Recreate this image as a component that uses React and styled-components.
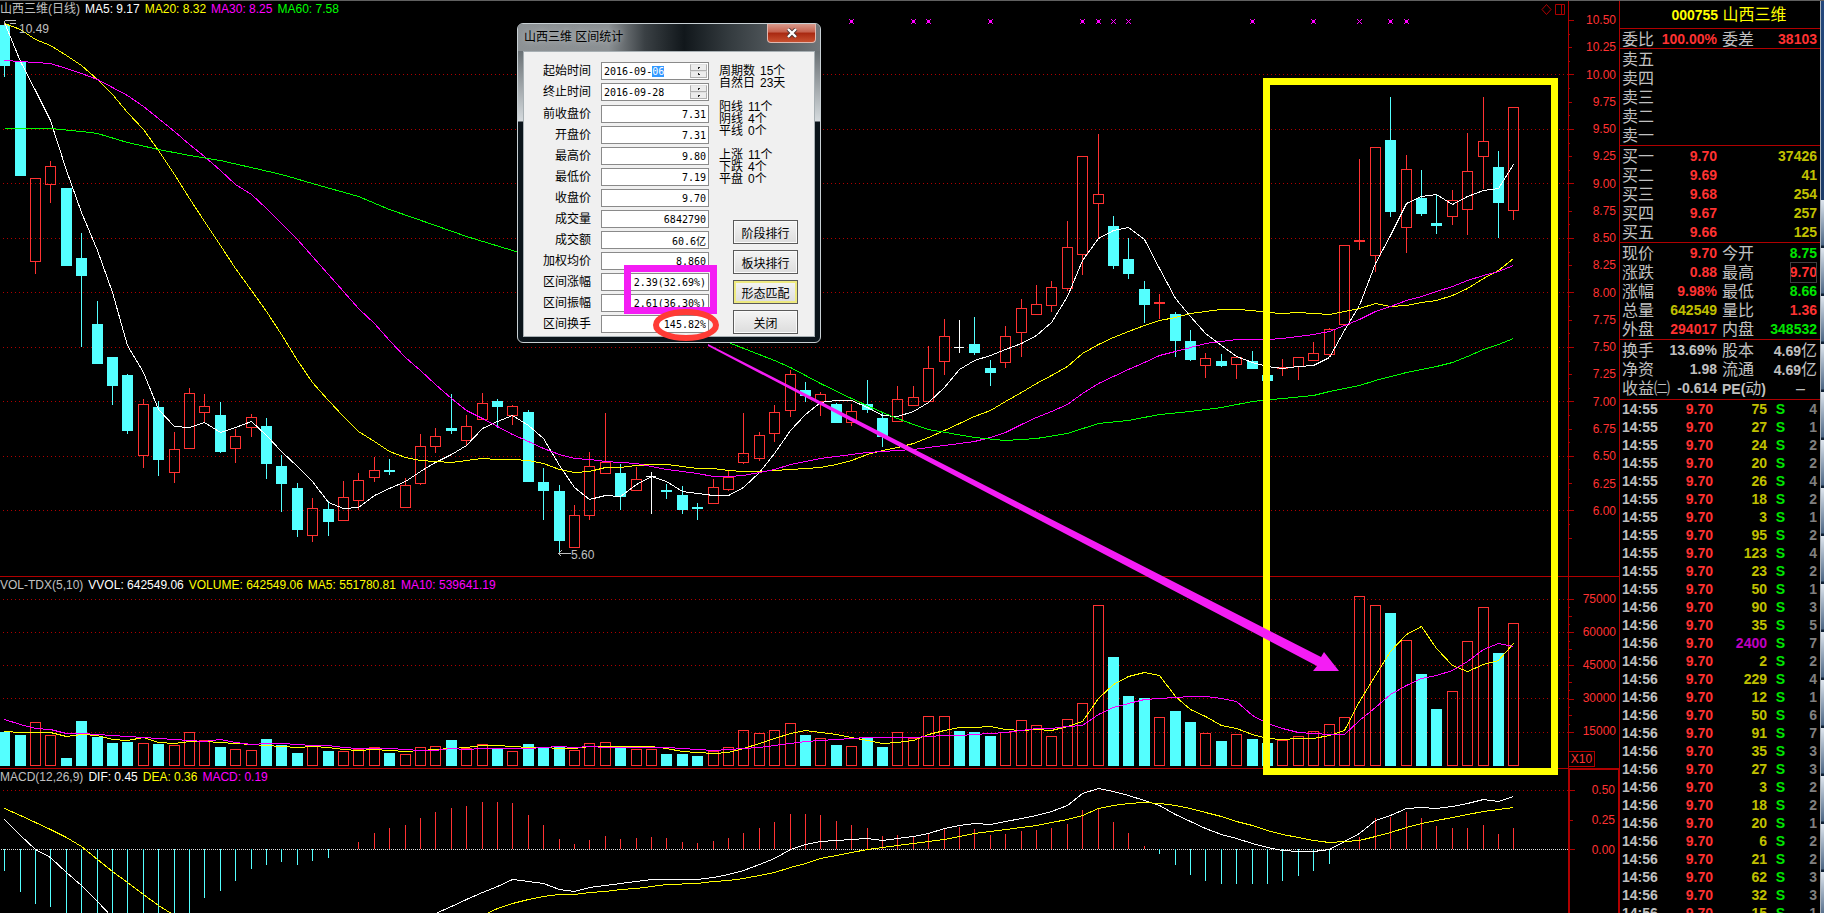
import React, { useEffect, useRef } from 'react';
import styled, { createGlobalStyle } from 'styled-components';

const UP = '#ff3232';
const DOWN = '#54ffff';
const LINE = '#b00000';

// [direction, high, body top, body bottom, low] on the plot scale
const candles = [
    ['d', 21, 25, 66, 77], ['d', 60, 62, 176, 176], ['u', 178, 178, 262, 274], ['u', 161, 166, 185, 203],
    ['d', 188, 188, 266, 266], ['d', 233, 258, 276, 347], ['d', 301, 324, 364, 364], ['d', 357, 357, 386, 405],
    ['d', 374, 375, 431, 434], ['u', 399, 404, 456, 468], ['d', 401, 407, 460, 476], ['u', 432, 449, 473, 483],
    ['u', 388, 393, 449, 449], ['u', 394, 406, 413, 422], ['d', 402, 415, 452, 453], ['u', 429, 436, 449, 463],
    ['u', 414, 417, 428, 437], ['d', 418, 426, 464, 479], ['d', 455, 466, 484, 512], ['d', 483, 488, 530, 537],
    ['u', 498, 508, 536, 542], ['d', 501, 509, 522, 536], ['u', 481, 497, 521, 521], ['u', 473, 480, 501, 510],
    ['u', 457, 470, 478, 482], ['d', 459, 470, 472, 475], ['u', 478, 485, 508, 508], ['u', 434, 446, 484, 485],
    ['u', 428, 436, 447, 453], ['d', 394, 428, 431, 434], ['u', 415, 426, 441, 445], ['u', 393, 403, 420, 420],
    ['d', 399, 401, 407, 428], ['u', 405, 406, 416, 425], ['d', 410, 412, 482, 482], ['d', 468, 482, 491, 520],
    ['d', 485, 491, 541, 554], ['u', 505, 515, 548, 548], ['u', 452, 466, 516, 520], ['u', 413, 462, 474, 474],
    ['d', 464, 473, 497, 510], ['u', 467, 479, 491, 491], ['n', 472, 476, 477, 514], ['d', 484, 490, 492, 499],
    ['d', 486, 495, 510, 514], ['d', 503, 507, 509, 520], ['u', 479, 487, 504, 504], ['u', 471, 477, 490, 491],
    ['u', 413, 453, 463, 464], ['u', 432, 435, 459, 461], ['u', 405, 412, 434, 442], ['u', 370, 374, 411, 417],
    ['d', 382, 390, 396, 402], ['u', 392, 394, 402, 416], ['d', 403, 404, 423, 423], ['u', 404, 411, 423, 426],
    ['d', 380, 404, 410, 413], ['d', 412, 418, 437, 447], ['u', 386, 399, 422, 422], ['u', 386, 397, 406, 406],
    ['u', 346, 368, 402, 402], ['u', 319, 336, 362, 375], ['n', 320, 347, 348, 353], ['d', 317, 344, 353, 355],
    ['d', 360, 368, 373, 386], ['u', 326, 336, 363, 368], ['u', 299, 308, 333, 357], ['u', 285, 304, 315, 315],
    ['u', 281, 287, 306, 312], ['u', 221, 247, 289, 291], ['u', 156, 156, 255, 275], ['u', 134, 194, 204, 238],
    ['d', 216, 226, 266, 269], ['d', 238, 259, 274, 279], ['d', 281, 289, 305, 323], ['u', 294, 302, 304, 319],
    ['d', 312, 314, 341, 357], ['d', 330, 341, 360, 361], ['u', 353, 358, 366, 378], ['d', 354, 361, 366, 367],
    ['u', 357, 357, 365, 379], ['d', 351, 361, 369, 369], ['d', 375, 375, 381, 381], ['u', 359, 367, 368, 376],
    ['u', 357, 357, 367, 380], ['u', 342, 353, 361, 361], ['u', 328, 329, 355, 356], ['u', 245, 245, 325, 325],
    ['u', 159, 240, 242, 250], ['u', 147, 147, 256, 272], ['d', 97, 140, 212, 217], ['u', 155, 169, 228, 253],
    ['d', 170, 198, 214, 216], ['d', 195, 223, 226, 234], ['u', 190, 200, 217, 225], ['u', 133, 171, 210, 235],
    ['u', 97, 141, 157, 189], ['d', 151, 167, 203, 238], ['u', 107, 107, 211, 220],
];

const volumeTops = [
    732, 735, 722, 735, 758, 721, 737, 743, 742, 743, 744, 745, 732, 740, 747, 749, 750, 739, 745, 753,
    745, 751, 751, 749, 747, 753, 754, 747, 746, 740, 748, 744, 749, 751, 744, 748, 747, 750, 743, 742,
    747, 749, 749, 754, 754, 756, 751, 747, 730, 733, 730, 723, 735, 738, 745, 746, 738, 747, 732, 738,
    716, 716, 731, 732, 736, 732, 720, 725, 736, 719, 703, 605, 657, 696, 698, 717, 711, 722, 733, 741,
    734, 739, 743, 740, 736, 731, 724, 717, 596, 605, 613, 640, 674, 709, 691, 641, 607, 653, 623,
];

const macdEnds = [
    871, 892, 904, 907, 914, 920, 925, 930, 930, 930, 925, 920, 914, 898, 891, 881, 869, 865, 862, 865,
    861, 858, 849, 842, 833, 828, 825, 818, 812, 808, 806, 802, 802, 803, 815, 825, 839, 844, 840, 836,
    839, 838, 837, 838, 842, 843, 841, 838, 833, 828, 822, 814, 814, 815, 821, 825, 828, 836, 835, 836,
    833, 828, 827, 829, 835, 834, 831, 830, 828, 824, 810, 809, 822, 833, 846, 854, 865, 875, 881, 884,
    884, 884, 884, 881, 876, 871, 864, 848, 837, 818, 817, 812, 818, 826, 828, 828, 825, 834, 828,
];

const dif = [
    [0, 819], [1, 835], [2, 849], [3, 857], [4, 872], [5, 885], [6, 901], [7, 917], [12, 960], [22, 960],
    [28, 913], [29, 906], [30, 899], [31, 892], [32, 886], [33, 879], [34, 881], [35, 883], [36, 889], [37, 891],
    [38, 887], [39, 885], [40, 883], [41, 881], [42, 879], [45, 879], [46, 877], [47, 874], [48, 870], [49, 864],
    [50, 858], [51, 849], [52, 844], [53, 841], [54, 840], [55, 839], [56, 838], [57, 840], [58, 838], [59, 836],
    [60, 833], [61, 828], [62, 825], [63, 823], [64, 824], [65, 821], [66, 818], [67, 815], [68, 811], [69, 805],
    [70, 793], [71, 788], [72, 791], [73, 795], [74, 800], [75, 805], [76, 814], [77, 821], [78, 828], [79, 834],
    [80, 838], [81, 843], [82, 847], [83, 850], [84, 851], [85, 851], [86, 849], [87, 841], [88, 833], [89, 820],
    [90, 815], [91, 808], [92, 807], [93, 808], [94, 806], [95, 803], [96, 799], [97, 801], [98, 796],
];

const dea = [
    [0, 808], [1, 815], [2, 822], [3, 829], [4, 837], [5, 846], [6, 859], [7, 871], [8, 882], [9, 894],
    [10, 905], [11, 915], [16, 960], [26, 950], [31, 915], [32, 908], [33, 903], [34, 899], [35, 896], [36, 894],
    [37, 894], [38, 892], [39, 891], [40, 889], [41, 888], [42, 886], [43, 884], [45, 883], [46, 881], [47, 880],
    [48, 878], [49, 875], [50, 872], [51, 867], [52, 863], [53, 858], [54, 855], [55, 852], [56, 849], [57, 847],
    [58, 845], [60, 841], [61, 839], [62, 836], [63, 833], [64, 831], [67, 825], [68, 822], [69, 819], [70, 815],
    [71, 808], [72, 805], [73, 803], [74, 802], [75, 803], [76, 805], [77, 808], [78, 812], [79, 816], [80, 821],
    [81, 825], [82, 830], [83, 834], [84, 837], [85, 840], [86, 842], [87, 841], [88, 840], [89, 836], [90, 832],
    [91, 827], [92, 823], [93, 820], [94, 817], [95, 814], [96, 811], [97, 809], [98, 807],
];

const ma60 = [
    [0, 128], [3, 128], [5, 131], [6, 133], [8, 142], [10, 149], [12, 155], [14, 160], [18, 174], [20, 183],
    [23, 196], [25, 209], [28, 225], [30, 236], [33, 250], [39, 283], [47, 342], [50, 360], [51, 367], [53, 383],
    [55, 398], [57, 412], [58, 418], [59, 424], [60, 429], [63, 437], [65, 440], [67, 438], [69, 433], [71, 423],
    [73, 420], [75, 414], [77, 411], [79, 407], [81, 401], [83, 398], [85, 395], [86, 391], [88, 385], [89, 380],
    [91, 372], [93, 366], [94, 362], [95, 356], [96, 349], [97, 344], [98, 338],
];

// values before the first full averaging window
const ma5Head = [22, 61, 90, 120];
const ma20Head = [23, 29, 39, 45, 55, 65, 79, 94, 112, 129, 150, 174, 198, 221, 245, 268, 290, 311, 334];
const ma30Head = [
    60, 61, 62, 63, 68, 73, 79, 87, 95, 106, 118, 131, 144, 156, 170,
    184, 194, 208, 223, 239, 256, 274, 291, 308, 323, 340, 357, 370, 384,
];
const vol5Head = [731, 732, 732, 732];
const vol10Head = [719, 724, 728, 729, 733, 733, 734, 735, 736];

const closes = candles.map(c => (c[0] === 'd' ? c[3] : c[2]));
const slotX = i => Math.floor(4.6 + 15.4 * i);

const average = (values, span, head) =>
    values.map((v, i) => {
        if (i < head.length) return [i, head[i]];
        const part = values.slice(i - span + 1, i + 1);
        return [i, part.reduce((a, b) => a + b, 0) / span];
    });

const toPoints = list => list.map(([i, y]) => `${slotX(i) + 0.5},${Math.round(y) + 0.5}`).join(' ');

const markers = [
    [55, 1], [59, 1], [60, 1], [64, 1], [70, 1], [71, 1], [72, 0], [73, 0],
    [81, 1], [85, 1], [88, 0], [90, 1], [91, 1],
];

const priceGrid = [10, 9.5, 9, 8.5, 8, 7.5, 7, 6.5, 6];
const priceY = p => Math.round(74 + (10 - p) * 109);
const priceLabels = Array.from({ length: 19 }, (_, i) => (10.5 - i * 0.25).toFixed(2));
const volumeGrid = [599, 632, 665, 698, 732];

const sells = ['卖五', '卖四', '卖三', '卖二', '卖一'];
const buys = [
    ['买一', '9.70', '37426'],
    ['买二', '9.69', '41'],
    ['买三', '9.68', '254'],
    ['买四', '9.67', '257'],
    ['买五', '9.66', '125'],
];
const quotes = [
    ['现价', '9.70', 'red', '今开', '8.75', 'green'],
    ['涨跌', '0.88', 'red', '最高', '9.70', 'red', true],
    ['涨幅', '9.98%', 'red', '最低', '8.66', 'green'],
    ['总量', '642549', 'gold', '量比', '1.36', 'red'],
    ['外盘', '294017', 'red', '内盘', '348532', 'green'],
];
const deals = [
    [75, 4], [27, 1], [24, 2], [20, 2], [26, 4], [18, 2], [3, 1], [95, 2], [123, 4], [23, 2],
    [50, 1], [90, 3], [35, 5], [2400, 7], [2, 2], [229, 4], [12, 1], [50, 6], [91, 7], [35, 3],
    [27, 3], [3, 2], [18, 2], [20, 1], [6, 2], [21, 2], [62, 3], [32, 3], [15, 1],
];

const stats = [
    ['prev', '前收盘价', '7.31'],
    ['open', '开盘价', '7.31'],
    ['high', '最高价', '9.80'],
    ['low', '最低价', '7.19'],
    ['close', '收盘价', '9.70'],
    ['volume', '成交量', '6842790'],
    ['amount', '成交额', '60.6亿'],
    ['average', '加权均价', '8.860'],
    ['change', '区间涨幅', '2.39(32.69%)'],
    ['swing', '区间振幅', '2.61(36.30%)'],
    ['turnover', '区间换手', '145.82%'],
];
const counts = [
    [['周期数', '15个'], ['自然日', '23天']],
    [['阳线', '11个'], ['阴线', '4个'], ['平线', '0个']],
    [['上涨', '11个'], ['下跌', '4个'], ['平盘', '0个']],
];

const GridLines = ({ rows }) => rows.map(y => (
    <line key={y} x1="3" x2="100%" y1={y + 0.5} y2={y + 0.5} stroke={LINE} strokeDasharray="1 3" />
));

const Candle = ({ index, data }) => {
    const [kind, high, top, bottom, low] = data;
    const x = slotX(index);
    if (kind === 'n') {
        return <g fill="#fff">
            <rect x={x} y={high} width="1" height={low - high} />
            <rect x={x - 5} y={top} width="10" height="1" />
        </g>;
    }
    if (kind === 'd') {
        return <g fill={DOWN}>
            <rect x={x} y={high} width="1" height={low - high} />
            <rect x={x - 5} y={top} width="11" height={bottom - top} />
        </g>;
    }
    return <g fill={UP}>
        <rect x={x} y={high} width="1" height={top - high} />
        <rect x={x} y={bottom} width="1" height={low - bottom} />
        <rect x={x - 4.5} y={top + 0.5} width="10" height={Math.max(bottom - top - 1, 1)} fill="none" stroke={UP} />
    </g>;
};

const PricePlot = () => (
    <Plot>
        <g transform="translate(0,-17)">
            <GridLines rows={priceGrid.map(priceY)} />
            {candles.map((c, i) => <Candle key={i} index={i} data={c} />)}
            <polyline points={toPoints(average(closes, 5, ma5Head))} stroke="#fff" fill="none" />
            <polyline points={toPoints(average(closes, 20, ma20Head))} stroke="#ff0" fill="none" />
            <polyline points={toPoints(average(closes, 30, ma30Head))} stroke="#f0f" fill="none" />
            <polyline points={toPoints(ma60)} stroke="#0f0" fill="none" />
            {markers.map(([i, big]) => (
                <g key={i} stroke="#f0f" fill="#f0f">
                    <path d={`M${slotX(i) - 2} 19 l5 5 m0 -5 l-5 5`} />
                    {big === 1 && <rect x={slotX(i) - 1} y="20" width="3" height="3" stroke="none" />}
                </g>
            ))}
            <path d="M4.5 20.5 H16 M4.5 20.5 v5 M4.5 20.5 h5 M10 23.5 h6" stroke="#c0c0c0" fill="none" />
            <PlotText x="19" y="33">10.49</PlotText>
            <path d="M558.5 553.5 h12 M558.5 553.5 l3 -3 M558.5 553.5 l3 3" stroke="#c0c0c0" fill="none" />
            <PlotText x="571" y="559">5.60</PlotText>
        </g>
    </Plot>
);

const VolumePlot = () => {
    const bars = volumeTops.map((top, i) => {
        const x = slotX(i);
        const kind = i === 42 ? 'u' : candles[i][0];
        return kind === 'u'
            ? <rect key={i} x={x - 4.5} y={top + 0.5} width="10" height={765 - top} fill="none" stroke={UP} />
            : <rect key={i} x={x - 5} y={top} width="11" height={766 - top} fill={DOWN} />;
    });
    return (
        <Plot>
            <g transform="translate(0,-593)">
                <GridLines rows={volumeGrid} />
                {bars}
                <polyline points={toPoints(average(volumeTops, 5, vol5Head))} stroke="#ff0" fill="none" />
                <polyline points={toPoints(average(volumeTops, 10, vol10Head))} stroke="#f0f" fill="none" />
            </g>
        </Plot>
    );
};

const MacdPlot = () => (
    <Plot>
        <g transform="translate(0,-785)">
            <GridLines rows={[790]} />
            <line x1="1" x2="100%" y1="849.5" y2="849.5" stroke="#e0e0e0" strokeDasharray="1 1" />
            {macdEnds.map((y, i) => (
                <rect
                    key={i}
                    x={slotX(i)}
                    y={Math.min(y, 849)}
                    width="1"
                    height={Math.abs(849 - y)}
                    fill={y > 849 ? DOWN : UP}
                />
            ))}
            <polyline points={toPoints(dif)} stroke="#fff" fill="none" />
            <polyline points={toPoints(dea)} stroke="#ff0" fill="none" />
        </g>
    </Plot>
);

// tick marks along the left edge of a scale
const Ticks = ({ from, step, count, offset, sizes }) => (
    <TickMarks>
        {Array.from({ length: count }, (_, i) => (
            <rect key={i} x="0" y={Math.round(from + i * step) - offset} width={sizes[i % sizes.length]} height="1" fill={LINE} />
        ))}
    </TickMarks>
);

const StatsDialog = () => {
    const start = useRef(null);

    useEffect(() => {
        start.current.focus();
        start.current.setSelectionRange(8, 10);
    }, [])

    return (
        <Dialog role="dialog" aria-label="山西三维 区间统计">
            <TitleBar>
                <DialogTitle>山西三维 区间统计</DialogTitle>
                <CloseButton type="button" aria-label="关闭窗口">
                    <svg width="12" height="10" viewBox="0 0 12 10">
                        <path d="M2 1 L10 9 M10 1 L2 9" stroke="#4a3535" strokeWidth="4" />
                        <path d="M2 1 L10 9 M10 1 L2 9" stroke="#fff" strokeWidth="2.4" />
                    </svg>
                </CloseButton>
            </TitleBar>
            <Client>
                <Fields>
                    <FieldRow>
                        <label htmlFor="start">起始时间</label>
                        <DateBox>
                            <DateInput id="start" ref={start} defaultValue="2016-09-06" />
                            <Spinner />
                        </DateBox>
                    </FieldRow>
                    <FieldRow $last>
                        <label htmlFor="end">终止时间</label>
                        <DateBox>
                            <DateInput id="end" defaultValue="2016-09-28" />
                            <Spinner />
                        </DateBox>
                    </FieldRow>
                    {stats.map(([id, label, value]) => (
                        <FieldRow key={id}>
                            <label htmlFor={id}>{label}</label>
                            <ValueInput id={id} readOnly value={value} />
                        </FieldRow>
                    ))}
                </Fields>
                <Side>
                    {counts.map(group => (
                        <CountGroup key={group[0][0]}>
                            {group.map(([name, count]) => (
                                <CountLine key={name}><span>{name}</span><span>{count}</span></CountLine>
                            ))}
                        </CountGroup>
                    ))}
                    <Actions>
                        <ActionButton type="button">阶段排行</ActionButton>
                        <ActionButton type="button">板块排行</ActionButton>
                        <ActionButton type="button" $active>形态匹配</ActionButton>
                        <ActionButton type="button">关闭</ActionButton>
                    </Actions>
                </Side>
            </Client>
        </Dialog>
    );
};

const Spinner = () => (
    <SpinnerBox>
        <SpinButton type="button" aria-label="增加" />
        <SpinButton type="button" aria-label="减少" />
    </SpinnerBox>
);

const App = () => {
    return (<Page>
        <GlobalStyle />
        <Charts>
            <Panel>
                <Main>
                    <Legend>
                        <Item color="#c0c0c0">山西三维(日线)</Item>
                        <Item color="#fff">MA5: 9.17</Item>
                        <Item color="#ff0">MA20: 8.32</Item>
                        <Item color="#f0f">MA30: 8.25</Item>
                        <Item color="#0f0">MA60: 7.58</Item>
                        <Tools width="24" height="14" viewBox="0 0 24 14">
                            <path d="M5.5 1.5 L10 6.5 L5.5 11.5 L1 6.5 Z M14.5 1.5 h9 v10 h-9 z M20.5 1.5 v10" fill="none" stroke={LINE} />
                        </Tools>
                    </Legend>
                    <PricePlot />
                </Main>
                <Axis>
                    <Ticks from={20} step={13.62} count={39} offset={1} sizes={[5, 1, 3, 1]} />
                    <PriceScale>
                        {priceLabels.map(p => <span key={p}>{p}</span>)}
                    </PriceScale>
                </Axis>
            </Panel>
            <Panel $ruled>
                <Main>
                    <Legend>
                        <Item color="#c0c0c0">VOL-TDX(5,10)</Item>
                        <Item color="#fff">VVOL: 642549.06</Item>
                        <Item color="#ff0">VOLUME: 642549.06</Item>
                        <Item color="#ff0">MA5: 551780.81</Item>
                        <Item color="#f0f">MA10: 539641.19</Item>
                    </Legend>
                    <VolumePlot />
                </Main>
                <Axis>
                    <Ticks from={599} step={8.3} count={17} offset={577} sizes={[5, 1, 3, 1]} />
                    <Scale $row={33}>
                        {[75000, 60000, 45000, 30000, 15000].map(v => <span key={v}>{v}</span>)}
                    </Scale>
                    <Factor>X10</Factor>
                </Axis>
            </Panel>
            <Panel $ruled>
                <Main>
                    <Legend>
                        <Item color="#c0c0c0">MACD(12,26,9)</Item>
                        <Item color="#fff">DIF: 0.45</Item>
                        <Item color="#ff0">DEA: 0.36</Item>
                        <Item color="#f0f">MACD: 0.19</Item>
                    </Legend>
                    <MacdPlot />
                </Main>
                <Axis $selected>
                    <Ticks from={790} step={29.6} count={3} offset={770} sizes={[5, 3, 5]} />
                    <Scale $row={30}>
                        {['0.50', '0.25', '0.00'].map(v => <span key={v}>{v}</span>)}
                    </Scale>
                </Axis>
            </Panel>
        </Charts>

        <Quote>
            <StockName><b>000755</b> 山西三维</StockName>
            <Section>
                <Row>
                    <Cell><span>委比</span><Num $tone="red">100.00%</Num></Cell>
                    <Cell><span>委差</span><Num $tone="red">38103</Num></Cell>
                </Row>
            </Section>
            <Section $pad={1}>
                {sells.map(s => <Row key={s}><Cell><span>{s}</span></Cell></Row>)}
            </Section>
            <Section $pad={1}>
                {buys.map(([label, price, amount]) => (
                    <Row key={label}>
                        <Cell><span>{label}</span><Num $tone="red">{price}</Num></Cell>
                        <Cell><span /><Num $tone="gold">{amount}</Num></Cell>
                    </Row>
                ))}
            </Section>
            <Section $pad={1}>
                {quotes.map(([a, av, at, b, bv, bt, boxed]) => (
                    <Row key={a}>
                        <Cell><span>{a}</span><Num $tone={at}>{av}</Num></Cell>
                        <Cell><span>{b}</span><Num $tone={bt} $boxed={boxed}>{bv}</Num></Cell>
                    </Row>
                ))}
            </Section>
            <Section $pad={2}>
                <Row>
                    <Cell><span>换手</span><Num>13.69%</Num></Cell>
                    <Cell><span>股本</span><span><Num>4.69</Num>亿</span></Cell>
                </Row>
                <Row>
                    <Cell><span>净资</span><Num>1.98</Num></Cell>
                    <Cell><span>流通</span><span><Num>4.69</Num>亿</span></Cell>
                </Row>
                <Row>
                    <Cell><span>收益㈡</span><Num>-0.614</Num></Cell>
                    <Cell><span><Num>PE(</Num>动<Num>)</Num></span><Dash>–</Dash></Cell>
                </Row>
            </Section>
            <DealList>
                <DealTable>
                    <colgroup>
                        <col width="50" /><col width="43" /><col width="54" /><col width="18" /><col />
                    </colgroup>
                    <tbody>
                        {deals.map(([amount, trades], i) => (
                            <tr key={i}>
                                <Td $tone="grey" $left>{i < 11 ? '14:55' : '14:56'}</Td>
                                <Td $tone="red">9.70</Td>
                                <Td $tone={amount > 1000 ? 'purple' : 'gold'}>{amount}</Td>
                                <Td $tone="green">S</Td>
                                <Td $tone="dim">{trades}</Td>
                            </tr>
                        ))}
                    </tbody>
                </DealTable>
            </DealList>
        </Quote>
        <DesktopEdge />

        <StatsDialog />
        <Notes>
            <rect x="1266.5" y="81.5" width="288" height="690" fill="none" stroke="#ff0" strokeWidth="7" />
            <polygon points="708,344 1321,657 1324,652 1339,671 1313,671 1317,666 708,346" fill="#f41df4" />
            <rect x="627.5" y="268.5" width="86" height="42" fill="none" stroke="#f41df4" strokeWidth="7" />
            <ellipse cx="686" cy="325" rx="30" ry="13" fill="none" stroke="#ff3b35" strokeWidth="6" />
        </Notes>
    </Page>);
}

export default App;

const tones = {
    red: '#ff3232',
    green: '#00e600',
    gold: '#c0c000',
    grey: '#c0c0c0',
    dim: '#808080',
    purple: '#c000c0',
};

const GlobalStyle = createGlobalStyle`
    * { box-sizing: border-box; }
    body {
        margin: 0;
        background: #000;
        font-family: "Liberation Sans", "Noto Sans CJK SC", sans-serif;
        font-size: 12px;
    }
`

const Page = styled.div`
    position: relative;
    display: flex;
    height: 100vh;
    overflow: hidden;
    background: #000;
    border-top: 1px solid #606060;
`

const Charts = styled.div`
    flex: 1;
    min-width: 0;
    display: grid;
    grid-template-rows: 575px 192px 1fr;
`

const Panel = styled.section`
    display: flex;
    min-height: 0;
    overflow: hidden;
    border-top: ${props => props.$ruled ? `1px solid ${LINE}` : 'none'};
`

const Main = styled.div`
    flex: 1;
    min-width: 0;
    display: flex;
    flex-direction: column;
`

const Legend = styled.div`
    display: flex;
    flex: none;
    gap: 5px;
    height: 16px;
    line-height: 17px;
    white-space: nowrap;
`

const Item = styled.span`
    color: ${props => props.color};
`

const Tools = styled.svg`
    margin: 2px 3px 0 auto;
`

const Plot = styled.svg`
    display: block;
    flex: 1;
    width: 100%;
    min-height: 0;
    shape-rendering: crispEdges;
`

const PlotText = styled.text`
    fill: #c0c0c0;
    font-size: 12px;
`

const Axis = styled.div`
    position: relative;
    width: 51px;
    padding-top: 6px;
    color: ${UP};
    border-left: 1px solid ${LINE};
    ${props => props.$selected && `
        padding-top: 5px;
        border: 2px solid ${LINE};
        border-width: 1px 1px 0 2px;
    `}
`

const TickMarks = styled.svg`
    position: absolute;
    left: 0;
    top: 0;
    width: 8px;
    height: 100%;
`

const Scale = styled.div`
    display: flex;
    flex-direction: column;
    padding-right: 3px;
    text-align: right;
    line-height: ${props => props.$row}px;
`

const PriceScale = styled(Scale)`
    height: 518px;

    span {
        flex: 1;
        line-height: 27px;
    }
`

const Factor = styled.div`
    position: relative;
    width: 26px;
    margin-top: 3px;
    line-height: 14px;
    text-align: center;
    border: 1px solid ${LINE};
    border-left: none;
`

const Quote = styled.aside`
    width: 201px;
    display: flex;
    flex-direction: column;
    color: #c0c0c0;
    font-size: 16px;
    border-left: 1px solid ${LINE};
`

const StockName = styled.div`
    height: 27px;
    padding-left: 18px;
    line-height: 28px;
    text-align: center;
    color: #ff0;

    b {
        font-size: 14px;
    }
`

const Section = styled.div`
    padding: 0 3px ${props => props.$pad || 0}px 2px;
    border-top: 1px solid ${LINE};
`

const Row = styled.div`
    display: grid;
    grid-template-columns: 1fr 1fr;
    gap: 5px;
    height: 19px;
    line-height: 21px;
`

const Cell = styled.div`
    display: flex;
    justify-content: space-between;
    white-space: nowrap;
`

const Num = styled.span`
    color: ${props => tones[props.$tone || 'grey']};
    font-size: 14px;
    font-weight: bold;
    outline: ${props => props.$boxed ? '1px solid #404040' : 'none'};
    outline-offset: -1px;
`

const Dash = styled.span`
    padding-right: 12px;
`

const DealList = styled.div`
    flex: 1;
    min-height: 0;
    overflow: hidden;
    border-top: 1px solid ${LINE};
`

const DealTable = styled.table`
    width: 100%;
    table-layout: fixed;
    border-collapse: collapse;
    font-size: 14px;
    font-weight: bold;
`

const Td = styled.td`
    height: 18px;
    padding: 0;
    line-height: 18px;
    text-align: ${props => props.$left ? 'left' : 'right'};
    color: ${props => tones[props.$tone]};

    &:first-child {
        padding-left: 2px;
    }

    &:last-child {
        padding-right: 3px;
    }
`

const DesktopEdge = styled.div`
    width: 4px;
    border-left: 1px solid #a8b0b8;
    background:
        linear-gradient(180deg, #24487c 0, #1c3c68 199px, transparent 199px),
        linear-gradient(180deg, #dfe6ee 0, #4c6684 45px, #0d1f33 46px) 0 7px / 4px 48px;
`

const Dialog = styled.div`
    position: absolute;
    left: 517px;
    top: 22px;
    width: 304px;
    padding: 0 5px 5px;
    color: #000;
    border: 1px solid #c8d0d4;
    border-radius: 6px;
    background: linear-gradient(180deg, #50565a 0, #6b7276 28px, #d5dadd 97px, #0b141a 98px);
`

const TitleBar = styled.div`
    display: flex;
    justify-content: space-between;
    height: 27px;
    margin: 0 -5px;
    padding: 0 4px 0 6px;
    border-radius: 5px 5px 0 0;
    background: linear-gradient(90deg, #8d9295 0, #8b9093 30%, #3a4044 42%, #11171b 55%, #343b3f 70%, #70767a 100%);
`

const DialogTitle = styled.div`
    line-height: 27px;
    text-shadow: 0 0 6px #c8ccce;
`

const CloseButton = styled.button`
    width: 49px;
    height: 19px;
    padding: 0;
    display: flex;
    align-items: center;
    justify-content: center;
    border: 1px solid #e0b8b0;
    border-top: none;
    border-radius: 0 0 4px 4px;
    background: linear-gradient(180deg, #d99a8c 0, #c5604c 45%, #a82810 50%, #c85030 100%);
`

const Client = styled.div`
    display: flex;
    height: 286px;
    padding-top: 10px;
    background: #f0f0f0;
    border: 1px solid #1c2226;
    outline: 1px solid #a8b0b4;
    outline-offset: -1px;
`

const Fields = styled.div`
    width: 185px;
`

const FieldRow = styled.div`
    display: flex;
    justify-content: flex-end;
    gap: 10px;
    height: 21px;
    margin-bottom: ${props => props.$last ? 1 : 0}px;
    line-height: 18px;
`

const fieldFont = `
    font-family: "DejaVu Sans Mono", "Noto Sans CJK SC", monospace;
    font-size: 10px;
    color: #000;
`

const ValueInput = styled.input`
    width: 108px;
    height: 18px;
    padding: 0 2px;
    text-align: right;
    background: #fff;
    border: 1px solid #8a8a8a;
    border-radius: 0;
    outline: none;
    ${fieldFont}
`

const DateBox = styled.div`
    display: flex;
    width: 108px;
    height: 18px;
    padding: 1px;
    background: #fff;
    border: 1px solid #8a8a8a;
`

const DateInput = styled.input`
    flex: 1;
    min-width: 0;
    padding: 0 1px;
    border: none;
    outline: none;
    background: #fff;
    ${fieldFont}

    &::selection {
        background: #3399ff;
        color: #fff;
    }
`

const SpinnerBox = styled.div`
    display: flex;
    flex-direction: column;
    justify-content: space-between;
    width: 17px;
`

const SpinButton = styled.button`
    height: 7px;
    padding: 0;
    border: 1px solid #b0b0b0;
    border-top-color: #e0e0e0;
    background: radial-gradient(circle at center, #222 0, #222 1px, #ececec 1px);
`

const Side = styled.div`
    flex: 1;
    padding-left: 10px;
    display: flex;
    flex-direction: column;
    line-height: 12px;
`

const CountGroup = styled.div`
    margin: 3px 0 9px;
`

const CountLine = styled.div`
    display: flex;
    gap: 5px;
`

const Actions = styled.div`
    display: flex;
    flex-direction: column;
    gap: 6px;
    margin: 26px 0 0 14px;
`

const ActionButton = styled.button`
    width: 65px;
    height: 24px;
    padding: 0;
    font-family: inherit;
    font-size: 12px;
    color: #000;
    border: 1px solid #5a5a5a;
    background: linear-gradient(180deg, #f4f4f4, #dcdcdc);
    box-shadow: inset 0 0 0 ${props => props.$active ? '2px #eeea80' : '1px #fafafa'};
`

const Notes = styled.svg`
    position: absolute;
    left: 0;
    top: -1px;
    width: 100%;
    height: 100%;
    pointer-events: none;
`
